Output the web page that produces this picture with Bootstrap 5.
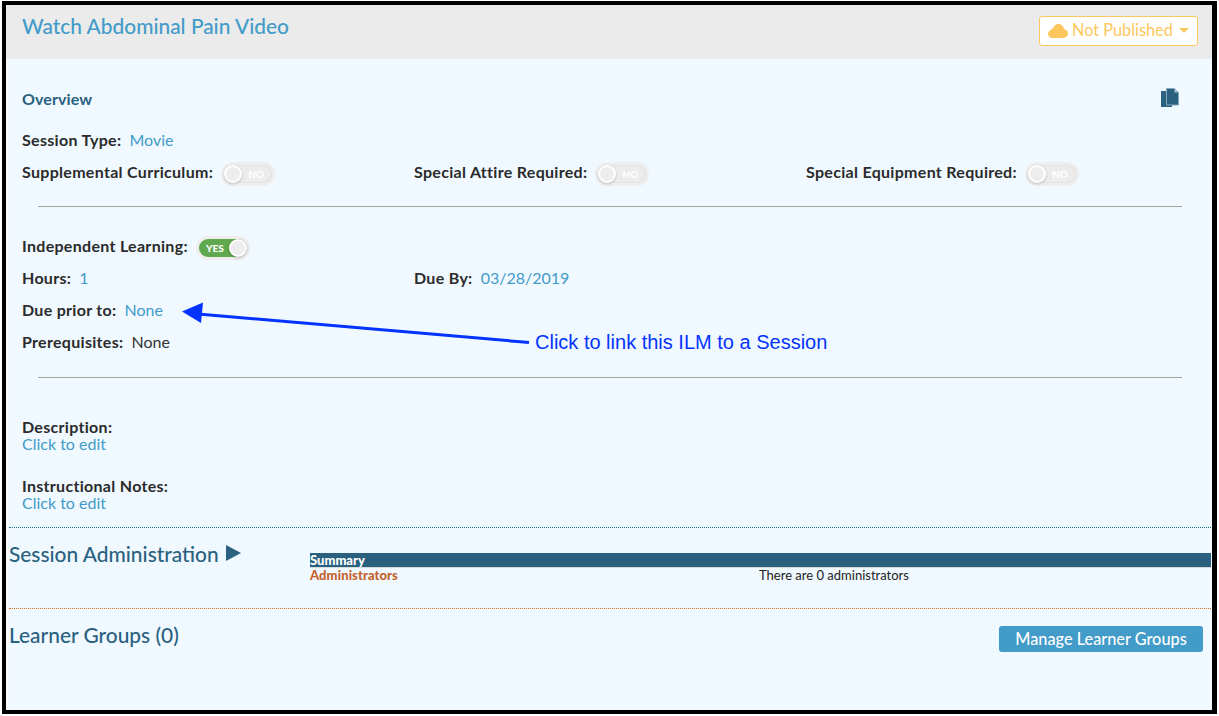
<!DOCTYPE html>
<html lang="en">

<head>
    <meta charset="UTF-8">
    <meta name="viewport" content="width=device-width, initial-scale=1.0">
    <title>Watch Abdominal Pain Video</title>
    <link href="https://cdn.jsdelivr.net/npm/bootstrap@5.3.3/dist/css/bootstrap.min.css" rel="stylesheet">
    <style>
        body {
            background-color: #fff;
            padding: 1px 2px;
            font-family: "Lato", "Open Sans", sans-serif;
            font-size: 16px;
            color: #333;
            overflow: hidden;
        }

        .ilm-frame {
            position: relative;
            width: 1215px;
            height: 713px;
            border: solid #000;
            border-width: 4px 5px 4px 4px;
            background-color: #f7fbff;
        }

        .ilm-head {
            height: 54px;
            background-color: #ebebeb;
            padding: 11px 14px 0 16px;
        }

        .ilm-title {
            font-size: 20.9px;
            line-height: 24px;
            color: #429bc8;
            font-weight: 500;
            margin: -2px 0 0;
        }

        .publish-btn {
            width: 159px;
            height: 30px;
            padding: 0 8px 1px 8px;
            background-color: #fff;
            border: 1px solid #fcc75d;
            border-radius: 3px;
            color: #fcc75d;
            font-size: 16.3px;
            --bs-btn-hover-color: #fcc75d;
            --bs-btn-hover-bg: #fff;
            --bs-btn-hover-border-color: #fcc75d;
        }

        .publish-btn::after {
            border-top-width: 5px;
            border-left-width: 5px;
            border-right-width: 5px;
            margin-left: 0;
        }

        .ilm-main {
            margin: 0 1px 0 3px;
            height: 651px;
            background-color: #f0f9ff;
        }

        .ilm-body {
            padding: 24px 0 0 13px;
            height: 468px;
        }

        .ilm-line {
            height: 32px;
            line-height: 32px;
            white-space: nowrap;
        }

        .ilm-line-gap {
            margin-top: 9px;
        }

        .ilm-columns {
            width: 1176px;
        }

        .ilm-label {
            font-weight: 700;
            color: #2b2b2b;
            letter-spacing: 0.3px;
            margin-right: 4px;
        }

        .ilm-link {
            color: #429bc8;
        }

        .ilm-overview {
            font-weight: 700;
            color: #2a617f;
            letter-spacing: 0.1px;
        }

        .ilm-copy {
            margin: 5px 32px 0 0;
        }

        .ilm-rule {
            height: 1px;
            background-color: #a3a39f;
            margin-left: 16px;
            margin-right: 29px;
            opacity: 1;
            border: 0;
        }

        .rule-one {
            margin-top: 18px;
            margin-bottom: 23px;
        }

        .rule-two {
            margin-top: 19px;
            margin-bottom: 40px;
        }

        .ilm-stack {
            line-height: 17px;
        }

        .notes-block {
            margin-top: 25px;
        }

        .toggle-track {
            display: inline-block;
            position: relative;
            width: 54px;
            height: 24px;
            vertical-align: middle;
            border-radius: 12px;
            background-color: #eeeeee;
            padding: 3px;
        }

        .toggle-inner {
            display: flex;
            align-items: center;
            height: 18px;
            border-radius: 9px;
            background-color: #ececec;
            color: #fff;
            font-size: 10px;
            font-weight: 900;
            box-shadow: inset 0 0 2px #d0d0d0;
            padding: 0 0 0 24px;
            line-height: 18px;
        }

        .toggle-knob {
            position: absolute;
            left: 3px;
            top: 3px;
            width: 18px;
            height: 18px;
            border-radius: 50%;
            background-color: #ededed;
            border: 2px solid #fff;
            box-shadow: 0 1px 3px rgba(0, 0, 0, 0.2);
        }

        .toggle-on .toggle-inner {
            background-color: #5fa84e;
            padding: 0 0 0 7px;
            box-shadow: none;
        }

        .toggle-on .toggle-knob {
            left: 33px;
        }

        .admin-section {
            border-top: 1px dotted #1f6b80;
            height: 81px;
            padding-top: 14px;
        }

        .section-title {
            font-size: 20.9px;
            line-height: 24px;
            font-weight: 500;
            color: #2a617f;
            margin: 0;
        }

        .admin-left {
            width: 301px;
            flex-shrink: 0;
        }

        .admin-arrow {
            display: inline-block;
            width: 0;
            height: 0;
            border-left: 15px solid #2a617f;
            border-top: 8px solid transparent;
            border-bottom: 8px solid transparent;
            margin: -2px 0 0 7px;
        }

        .admin-bar {
            background-color: #2a617f;
            border-bottom: 1px solid #d5dbe0;
            color: #fff;
            font-size: 13px;
            font-weight: 900;
            line-height: 14px;
            height: 15px;
            margin-top: 11px;
        }

        .admin-row {
            font-size: 13px;
            line-height: 14px;
            color: #222;
        }

        .admin-name {
            width: 449px;
            color: #c4622d;
            font-weight: 900;
            letter-spacing: 0.1px;
        }

        .groups-section {
            border-top: 1px dotted #d4701c;
            padding: 14px 8px 0 0;
        }

        .manage-btn {
            width: 204px;
            height: 26px;
            padding: 0;
            margin-top: 3px;
            background-color: #429bc8;
            border: 0;
            border-radius: 3px;
            color: #fff;
            font-size: 16.3px;
            font-weight: 500;
            line-height: 26px;
        }

        .ilm-note {
            position: absolute;
            left: 0;
            top: 0;
            pointer-events: none;
        }

        .ilm-note-text {
            position: absolute;
            left: 529px;
            top: 325px;
            font-family: "Liberation Sans", Arial, sans-serif;
            font-size: 20px;
            line-height: 24px;
            color: #0433ff;
            white-space: nowrap;
        }
    </style>
</head>

<body>
    <div class="ilm-frame">
        <div class="ilm-head d-flex justify-content-between">
            <h1 class="ilm-title">Watch Abdominal Pain Video</h1>
            <button type="button" class="btn publish-btn dropdown-toggle d-flex align-items-center justify-content-between">
                <span class="d-flex align-items-center gap-1">
                    <svg width="20" height="14" viewBox="0 0 20 14" aria-hidden="true">
                        <path fill="#fcc75d" d="M4.500 14C2 14 0 12.200 0 9.800 0 7.900 1.200 6.400 3 5.900 3.100 5.300 3.800 4.600 5 4.500 5.700 1.900 7.800 0 10.500 0 13.400 0 15.700 2.200 15.900 5.100 18.300 5.400 20 7.300 20 9.600 20 12 18 14 15.500 14Z" />
                    </svg>
                    Not Published
                </span>
            </button>
        </div>

        <div class="ilm-main">
            <div class="ilm-body">
                <div class="ilm-line d-flex justify-content-between align-items-start">
                    <span class="ilm-overview">Overview</span>
                    <svg class="ilm-copy" width="18" height="19" viewBox="0 0 18 19" aria-hidden="true">
                        <path fill="#2a617f" d="M0 3h6v14h5v2H0Z" />
                        <path fill="#2a617f" stroke="#86a9bd" stroke-width="1" d="M5.500 .5h8l4 4v12.500h-12Z" />
                        <path fill="#a9c4d3" d="M13.500 .5l4 4h-4Z" />
                    </svg>
                </div>
                <div class="ilm-line ilm-line-gap"><span class="ilm-label">Session Type:</span> <span class="ilm-link">Movie</span></div>
                <div class="row g-0 ilm-columns">
                    <div class="col-4 ilm-line"><span class="ilm-label">Supplemental Curriculum:</span>
                        <span class="toggle-track"><span class="toggle-inner">NO</span><span class="toggle-knob"></span></span>
                    </div>
                    <div class="col-4 ilm-line"><span class="ilm-label">Special Attire Required:</span>
                        <span class="toggle-track"><span class="toggle-inner">NO</span><span class="toggle-knob"></span></span>
                    </div>
                    <div class="col-4 ilm-line"><span class="ilm-label">Special Equipment Required:</span>
                        <span class="toggle-track"><span class="toggle-inner">NO</span><span class="toggle-knob"></span></span>
                    </div>
                </div>
                <hr class="ilm-rule rule-one">
                <div class="ilm-line"><span class="ilm-label">Independent Learning:</span>
                    <span class="toggle-track toggle-on"><span class="toggle-inner">YES</span><span class="toggle-knob"></span></span>
                </div>
                <div class="row g-0 ilm-columns">
                    <div class="col-4 ilm-line"><span class="ilm-label">Hours:</span> <span class="ilm-link">1</span></div>
                    <div class="col-4 ilm-line"><span class="ilm-label">Due By:</span> <span class="ilm-link">03/28/2019</span></div>
                </div>
                <div class="ilm-line"><span class="ilm-label">Due prior to:</span> <span class="ilm-link">None</span></div>
                <div class="ilm-line"><span class="ilm-label">Prerequisites:</span> None</div>
                <hr class="ilm-rule rule-two">
                <div class="ilm-stack">
                    <div class="ilm-label">Description:</div>
                    <div class="ilm-link">Click to edit</div>
                </div>
                <div class="ilm-stack notes-block">
                    <div class="ilm-label">Instructional Notes:</div>
                    <div class="ilm-link">Click to edit</div>
                </div>
            </div>

            <div class="admin-section d-flex">
                <div class="admin-left">
                    <h2 class="section-title d-flex align-items-center">Session Administration <span class="admin-arrow"></span></h2>
                </div>
                <div class="flex-grow-1">
                    <div class="admin-bar">Summary</div>
                    <div class="admin-row d-flex">
                        <div class="admin-name">Administrators</div>
                        <div>There are 0 administrators</div>
                    </div>
                </div>
            </div>

            <div class="groups-section d-flex justify-content-between">
                <h2 class="section-title">Learner Groups (0)</h2>
                <button type="button" class="btn manage-btn">Manage Learner Groups</button>
            </div>
        </div>

        <svg class="ilm-note" width="1206" height="705" aria-hidden="true">
            <line x1="523" y1="337.500" x2="192" y2="309" stroke="#0433ff" stroke-width="3" />
            <polygon fill="#0433ff" points="176,306.500 197,297.500 195,318" />
        </svg>
        <div class="ilm-note-text">Click to link this ILM to a Session</div>
    </div>
    <script src="https://cdn.jsdelivr.net/npm/bootstrap@5.3.3/dist/js/bootstrap.bundle.min.js"></script>
</body>

</html>
